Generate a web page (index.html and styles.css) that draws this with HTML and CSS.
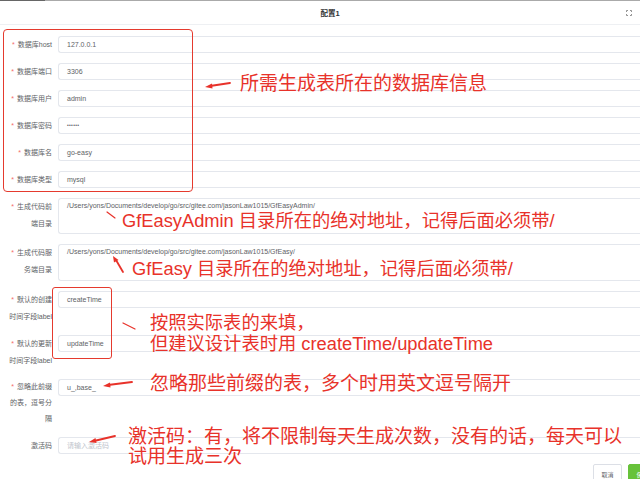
FILE: index.html
```html
<!DOCTYPE html>
<html lang="zh">
<head>
<meta charset="utf-8">
<link rel="stylesheet" href="styles.css">
</head>
<body>
<div class="modal">
  <div class="header">
    <span class="title">配置1</span>
    <svg class="fs-icon" width="6" height="6" viewBox="0 0 6 6"><path d="M0.5 2V0.5H2M4 0.5H5.5V2M5.5 4V5.5H4M2 5.5H0.5V4" fill="none" stroke="#777" stroke-width="0.8"/></svg>
  </div>
  <div class="form">
    <div class="row"><label class="label"><i>*</i> 数据库host</label><div class="input">127.0.0.1</div></div>
    <div class="row"><label class="label"><i>*</i> 数据库端口</label><div class="input">3306</div></div>
    <div class="row"><label class="label"><i>*</i> 数据库用户</label><div class="input">admin</div></div>
    <div class="row"><label class="label"><i>*</i> 数据库密码</label><div class="input pwd">••••••</div></div>
    <div class="row"><label class="label"><i>*</i> 数据库名</label><div class="input">go-easy</div></div>
    <div class="row"><label class="label"><i>*</i> 数据库类型</label><div class="input">mysql</div></div>
    <div class="row"><label class="label"><i>*</i> 生成代码前<br>端目录</label><div class="input area">/Users/yons/Documents/develop/go/src/gitee.com/jasonLaw1015/GfEasyAdmin/</div></div>
    <div class="row"><label class="label"><i>*</i> 生成代码服<br>务端目录</label><div class="input area area2">/Users/yons/Documents/develop/go/src/gitee.com/jasonLaw1015/GfEasy/</div></div>
    <div class="row"><label class="label"><i>*</i> 默认的创建<br>时间字段label</label><div class="input">createTime</div></div>
    <div class="row"><label class="label"><i>*</i> 默认的更新<br>时间字段label</label><div class="input">updateTime</div></div>
    <div class="row"><label class="label tight"><i>*</i> 忽略此前缀<br>的表，逗号分<br>隔</label><div class="input">u_,base_</div></div>
    <div class="row"><label class="label">激活码</label><div class="input placeholder">请输入激活码</div></div>
  </div>
  <div class="footer">
    <button class="btn cancel">取消</button>
    <button class="btn save">保存</button>
  </div>
</div>

<div class="box box1"></div>
<div class="box box2"></div>

<svg class="marks" width="640" height="479" viewBox="0 0 640 479">
  <g stroke="#e8322a" stroke-linecap="round" fill="none">
    <path d="M230 83 L210 86" stroke-width="1.8"/>
    <path d="M107 212 L115 218" stroke-width="1.2"/>
    <path d="M116 260 L123 272" stroke-width="1.8"/>
    <path d="M123 323 L135 329" stroke-width="1.2"/>
    <path d="M132 382 L108 385" stroke-width="1.8"/>
    <path d="M115 436 L94 441" stroke-width="1.8"/>
  </g>
  <g fill="#e8322a">
    <path d="M205 87 L212 83.5 L212.5 88.5 Z"/>
    <path d="M113 256 L118.5 260 L114 262.5 Z"/>
    <path d="M103 386 L110 382.5 L110.5 387.5 Z"/>
    <path d="M89 442 L95.5 438 L96.5 443 Z"/>
  </g>
</svg>

<div class="note n1">所需生成表所在的数据库信息</div>
<div class="note n2">GfEasyAdmin 目录所在的绝对地址，记得后面必须带/</div>
<div class="note n3">GfEasy 目录所在的绝对地址，记得后面必须带/</div>
<div class="note n4">按照实际表的来填，<br>但建议设计表时用 createTime/updateTime</div>
<div class="note n5">忽略那些前缀的表，多个时用英文逗号隔开</div>
<div class="note n6">激活码：有，将不限制每天生成次数，没有的话，每天可以<br>试用生成三次</div>
</body>
</html>
```
FILE: styles.css
```css
html, body {
  margin: 0;
  padding: 0;
}
body {
  width: 640px;
  height: 479px;
  overflow: hidden;
  position: relative;
  background: #fff;
  font-family: "Liberation Sans", "Noto Sans CJK SC", sans-serif;
}
.modal {
  width: 660px;
}
.header {
  position: relative;
  height: 23px;
  border-top: 1px solid #aaa;
  border-bottom: 1px solid #eef0f3;
  display: flex;
  align-items: center;
  justify-content: center;
}
.header::before {
  content: "";
  position: absolute;
  left: 0;
  top: -1px;
  width: 45px;
  height: 1px;
  background: #666;
}
.title {
  font-size: 7.5px;
  font-weight: bold;
  color: #303133;
}
.fs-icon {
  position: absolute;
  left: 626px;
  top: 9px;
}
.form {
  padding-top: 11px;
}
.row {
  display: grid;
  grid-template-columns: 52px 1fr;
  column-gap: 6px;
  margin-bottom: 10px;
}
.label {
  text-align: right;
  font-size: 7px;
  line-height: 17px;
  color: #606266;
  white-space: nowrap;
}
.label.tight {
  line-height: 16px;
}
.label i {
  font-style: normal;
  color: #f56c6c;
  margin-right: 1px;
}
.input {
  height: 15px;
  border: 1px solid #e4e7ed;
  border-right: none;
  border-radius: 3px 0 0 3px;
  padding-left: 8px;
  font-size: 7px;
  line-height: 15px;
  color: #606266;
}
.input.pwd {
  font-size: 5px;
  letter-spacing: 0.3px;
}
.input.area {
  height: 34px;
  line-height: 14px;
}
.input.area2 {
  height: 35px;
}
.input.placeholder {
  color: #c0c4cc;
}
.footer {
  display: flex;
  justify-content: flex-end;
  gap: 6px;
  padding-top: 0;
  padding-right: 3px;
}
.btn {
  height: 20px;
  width: 29px;
  padding: 0;
  border-radius: 2px;
  font-size: 6px;
  font-family: "Noto Sans CJK SC", sans-serif;
}
.cancel {
  background: #fff;
  border: 1px solid #dcdfe6;
  color: #606266;
}
.save {
  background: #67c23a;
  border: 1px solid #67c23a;
  color: #fff;
}
.box {
  position: absolute;
  border: 1.5px solid #e53a2e;
  border-radius: 4px;
}
.box1 {
  left: 3px;
  top: 29px;
  width: 188px;
  height: 161px;
}
.box2 {
  left: 52px;
  top: 287px;
  width: 58px;
  height: 70px;
  border-radius: 3px;
}
.marks {
  position: absolute;
  left: 0;
  top: 0;
}
.note {
  position: absolute;
  font-family: "Liberation Sans", "Noto Sans CJK SC", sans-serif;
  font-size: 19px;
  line-height: 20px;
  color: #e8322a;
  white-space: nowrap;
}
.n1 { left: 240px; top: 74px; }
.n2 { left: 122px; top: 211px; font-size: 18.3px; }
.n3 { left: 132px; top: 259px; font-size: 18.3px; }
.n4 { left: 150px; top: 312px; line-height: 21px; font-size: 18.3px; }
.n5 { left: 150px; top: 374px; }
.n6 { left: 128px; top: 427px; }
```
